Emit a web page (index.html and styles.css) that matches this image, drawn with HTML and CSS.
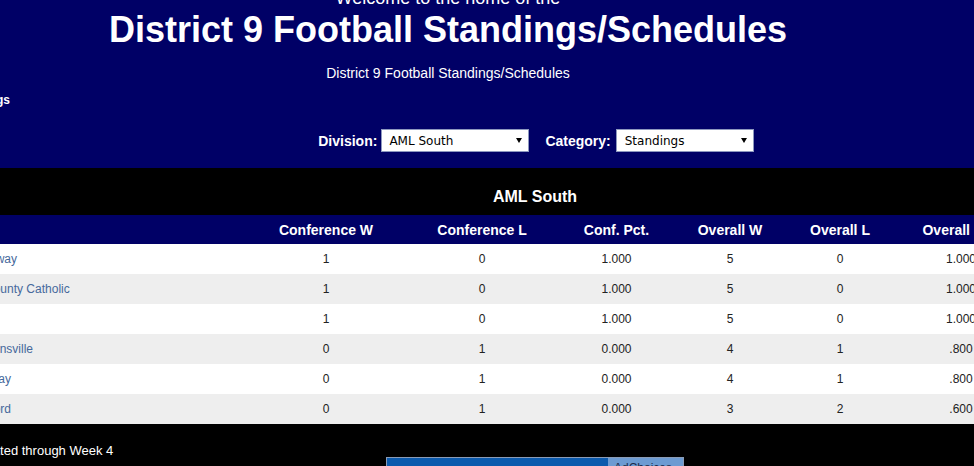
FILE: index.html
```html
<!DOCTYPE html>
<html lang="en">
<head>
<meta charset="utf-8">
<title>District 9 Football Standings/Schedules</title>
<link rel="stylesheet" href="styles.css">
</head>
<body>
<div class="page">
  <header class="masthead">
    <div class="titles">
      <p class="welcome">Welcome to the home of the</p>
      <h1 class="title">District 9 Football Standings/Schedules</h1>
      <p class="subtitle">District 9 Football Standings/Schedules</p>
    </div>
    <p class="crumb">Standings</p>
    <form class="filters">
      <label class="field">
        <span class="field-label">Division:</span>
        <span class="select select-division">
          <select>
            <option>AML South</option>
          </select>
        </span>
      </label>
      <label class="field field-category">
        <span class="field-label">Category:</span>
        <span class="select select-category">
          <select>
            <option>Standings</option>
          </select>
        </span>
      </label>
    </form>
  </header>

  <main class="content">
    <h2 class="division-title">AML South</h2>
    <table class="standings">
      <colgroup>
        <col class="c-team"><col class="c-cw"><col class="c-cl"><col class="c-pct"><col class="c-ow"><col class="c-ol"><col class="c-opct"><col class="c-extra">
      </colgroup>
      <thead>
        <tr>
          <th></th>
          <th>Conference W</th>
          <th>Conference L</th>
          <th>Conf. Pct.</th>
          <th>Overall W</th>
          <th>Overall L</th>
          <th>Overall Pct.</th>
          <th></th>
        </tr>
      </thead>
      <tbody>
        <tr><td class="team"><a href="#">Brockway</a></td><td>1</td><td>0</td><td>1.000</td><td>5</td><td>0</td><td>1.000</td><td></td></tr>
        <tr><td class="team"><a href="#">Elk County Catholic</a></td><td>1</td><td>0</td><td>1.000</td><td>5</td><td>0</td><td>1.000</td><td></td></tr>
        <tr><td class="team"><a href="#">Kane</a></td><td>1</td><td>0</td><td>1.000</td><td>5</td><td>0</td><td>1.000</td><td></td></tr>
        <tr><td class="team"><a href="#">Curwensville</a></td><td>0</td><td>1</td><td>0.000</td><td>4</td><td>1</td><td>.800</td><td></td></tr>
        <tr><td class="team"><a href="#">Ridgway</a></td><td>0</td><td>1</td><td>0.000</td><td>4</td><td>1</td><td>.800</td><td></td></tr>
        <tr><td class="team"><a href="#">Bradford</a></td><td>0</td><td>1</td><td>0.000</td><td>3</td><td>2</td><td>.600</td><td></td></tr>
      </tbody>
    </table>
    <p class="note">Updated through Week 4</p>
    <div class="ad-row">
      <div class="ad">
        <span class="adchoices">AdChoices
          <svg class="adchoices-icon" width="10" height="10" viewBox="0 0 10 10" aria-hidden="true"><rect width="10" height="10" fill="#9cc3ea"/><path d="M3 2 L8 5 L3 8 Z" fill="#ffffff"/></svg>
        </span>
      </div>
    </div>
  </main>
</div>
</body>
</html>
```

FILE: styles.css
```css
html, body {
  margin: 0;
  padding: 0;
  background: #000;
  overflow: hidden;
}

body {
  font-family: "Liberation Sans", Arial, sans-serif;
  color: #fff;
}

.page {
  width: 1300px;
  margin-left: -45px;
  margin-top: -12px;
}

/* ---------- masthead ---------- */
.masthead {
  background: #000066;
  padding-bottom: 16px;
}

.titles {
  width: 986px;
  text-align: center;
}

.welcome {
  margin: 0;
  font-size: 18px;
  line-height: 20px;
}

.title {
  margin: 2px 0 0;
  font-size: 36px;
  line-height: 40px;
  font-weight: bold;
}

.subtitle {
  margin: 15px 0 0;
  font-size: 14px;
  line-height: 16px;
}

.crumb {
  margin: 12px 0 0 -3px;
  font-size: 12px;
  line-height: 14px;
  font-weight: bold;
}

.filters {
  box-sizing: border-box;
  width: 1160px;
  height: 23px;
  margin: 22px 0 0;
  padding-left: 2px;
  display: flex;
  justify-content: center;
  align-items: center;
  gap: 16px;
}

.field {
  display: flex;
  align-items: center;
  gap: 4px;
}

.field-category {
  gap: 5px;
}

.field-label {
  font-size: 14px;
  font-weight: bold;
}

.select {
  position: relative;
  display: block;
  height: 23px;
}

.select select {
  -webkit-appearance: none;
  appearance: none;
  display: block;
  box-sizing: border-box;
  height: 23px;
  margin: 0;
  border: 1px solid #8d98bf;
  border-radius: 0;
  background: #fff;
  color: #000;
  font-family: "DejaVu Sans", Verdana, sans-serif;
  font-size: 12px;
  padding: 0 0 0 7px;
}

.select-division select { width: 148px; }
.select-category select { width: 138px; padding-left: 8px; }

.select::after {
  content: "";
  position: absolute;
  right: 7px;
  top: 9px;
  border-left: 3px solid transparent;
  border-right: 3px solid transparent;
  border-top: 5px solid #000;
  pointer-events: none;
}

/* ---------- content ---------- */
.division-title {
  width: 1160px;
  margin: 0;
  padding-top: 19px;
  text-align: center;
  font-size: 16px;
  line-height: 20px;
  font-weight: bold;
}

.standings {
  margin: 8px 0 0 10px;
  border-collapse: collapse;
  table-layout: fixed;
  width: 1214px;
}

.c-team { width: 283px; }
.c-cw { width: 156px; }
.c-cl { width: 156px; }
.c-pct { width: 113px; }
.c-ow { width: 114px; }
.c-ol { width: 106px; }
.c-opct { width: 136px; }
.c-extra { width: 150px; }

.standings th {
  background: #000066;
  color: #fff;
  font-size: 14px;
  font-weight: bold;
  height: 29px;
  padding: 0;
  text-align: center;
  white-space: nowrap;
}

.standings td {
  height: 30px;
  padding: 0;
  text-align: center;
  font-size: 12px;
  color: #222;
  white-space: nowrap;
}

.standings tbody tr { background: #fff; }
.standings tbody tr:nth-child(even) { background: #eeeeee; }

.standings td.team { text-align: left; }

.standings td.team a {
  color: #46699c;
  text-decoration: none;
}

.note {
  margin: 21px 0 0 14px;
  font-size: 13px;
  line-height: 12px;
}

.ad-row {
  width: 1160px;
  display: flex;
  justify-content: center;
}

.ad {
  box-sizing: border-box;
  width: 298px;
  height: 250px;
  border: 1px solid #8a9bb5;
  background: #0b5aad;
  display: flex;
  justify-content: flex-end;
  align-items: flex-start;
}

.adchoices {
  display: flex;
  align-items: center;
  gap: 4px;
  background: #6c9bd2;
  color: #1b2b4b;
  font-size: 12px;
  line-height: 14px;
  padding: 3px 3px 0 6px;
  width: 75px;
  box-sizing: border-box;
}
```
